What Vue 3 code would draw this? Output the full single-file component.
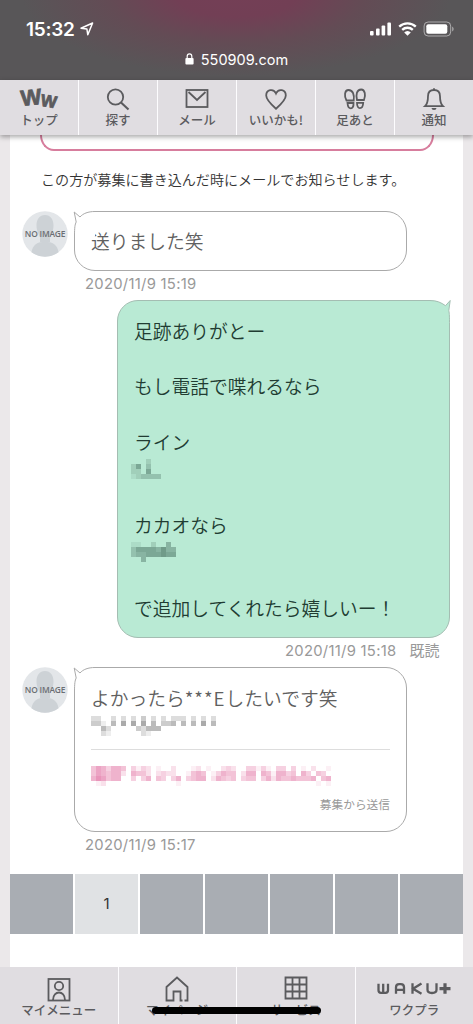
<script setup>
const topNav = [
  { label: 'トップ', icon: 'logo' },
  { label: '探す', icon: 'search' },
  { label: 'メール', icon: 'mail' },
  { label: 'いいかも!', icon: 'heart' },
  { label: '足あと', icon: 'feet' },
  { label: '通知', icon: 'bell' },
]
const bottomNav = [
  { label: 'マイメニュー', icon: 'menu' },
  { label: 'マイページ', icon: 'home' },
  { label: 'サービス', icon: 'grid' },
  { label: 'ワクプラ', icon: 'waku' },
]
const pages = ['', '1', '', '', '', '', '']

// Each digit is the strength of one 5px block, 0 = empty.
const masks = {
  line: ['000200', '250300', '220500', '123333'],
  kakao: ['110020040', '355554644', '344555655', '004000000'],
  name: [
    '2200202020302020222020202',
    '3310405050504033404040504',
    '0042000003244400000000000',
    '0021000000210000000000000',
  ],
  title: [
    '465355403132010020001201002320033131033030102001',
    '465455205442023220014540135440255054155340530430',
    '576455003035043035034550254340344035254454445045',
    '012000000000000001000000000000000000000000000101',
  ],
}
const cells = (rows) =>
  rows.flatMap((r, y) => [...r].map((v, x) => ({ x: x * 5, y: y * 5, o: +v / 10 }))).filter((c) => c.o)
const lineCells = cells(masks.line)
const kakaoCells = cells(masks.kakao)
const nameCells = cells(masks.name)
const titleCells = cells(masks.title)
</script>

<template>
  <div class="phone">
    <header class="chrome">
      <div class="status">
        <span class="time">15:32</span>
        <svg class="loc" width="14" height="14" viewBox="0 0 14 14"><path d="M1 6.200 12.600 1 7.800 12.800 6.900 7Z" fill="none" stroke="#fff" stroke-width="1.500" stroke-linejoin="round" /></svg>
        <svg class="signals" width="86" height="16" viewBox="0 0 86 16">
          <g fill="#fff">
            <rect x="1" y="10" width="3.600" height="4.500" rx="1" /><rect x="7" y="7.500" width="3.600" height="7" rx="1" />
            <rect x="12.600" y="4.500" width="3.600" height="10" rx="1" /><rect x="18.400" y="1.500" width="3.600" height="13" rx="1" />
            <path d="M35.200 11.500a4.300 4.300 0 0 1 6.600 0l-3.300 3.300Z" />
            <rect x="57.300" y="3.200" width="21" height="9.600" rx="2" />
            <path d="M83.300 5.500c1.600.8 1.600 4.200 0 5Z" opacity=".6" />
          </g>
          <g fill="none" stroke="#fff" stroke-width="2.300"><path d="M30.200 5.700a12 12 0 0 1 16.600 0M33.200 8.900a7.600 7.600 0 0 1 10.600 0" /></g>
          <rect x="55.100" y="1" width="26.600" height="14" rx="4" fill="none" stroke="#fff" stroke-opacity=".5" />
        </svg>
      </div>
      <div class="address">
        <svg width="9" height="12" viewBox="0 0 9 12"><rect x=".4" y="5" width="8.200" height="6.500" rx="1" fill="#fff" /><path d="M2.200 5.500V3.200a2.300 2.300 0 0 1 4.600 0v2.300" fill="none" stroke="#fff" stroke-width="1.200" /></svg>
        <span>550909.com</span>
      </div>
    </header>

    <nav class="tabs top">
      <div v-for="t in topNav" :key="t.icon" class="tab">
        <div v-if="t.icon === 'logo'" class="ww"><b>W</b><b class="small">W</b></div>
        <svg v-else width="44" height="26" viewBox="0 0 44 26" class="ico">
          <g v-if="t.icon === 'search'"><circle cx="19.500" cy="10" r="7.700" /><path d="m25 15.500 7.500 7" stroke-width="2.100" /></g>
          <g v-else-if="t.icon === 'mail'"><rect x="11.500" y="3" width="21" height="17" /><path d="m13.500 5 8.500 8 8.500-8" /></g>
          <path v-else-if="t.icon === 'heart'" d="M22 21.700C17 17.300 12.200 13 12.200 8.500c0-6 7.300-7.500 9.800-2 2.500-5.500 9.800-4 9.800 2 0 4.500-4.800 8.800-9.800 13.200Z" />
          <g v-else-if="t.icon === 'feet'">
            <path d="M13.500 13.500c-2.500-4.500-2-10.500 2-10.500 4.500 0 6 5 5.200 10.500Z" /><path d="M31 13c2-4.500 1-10.500-2.800-10.500-4.500 0-5.500 5-4.200 10.500Z" />
            <path d="M14.500 16h6c.5 7.200-5.500 7.200-6 0Z" /><path d="M24 15.800h6.200c-.3 7.200-6.400 7.200-6.200 0Z" />
          </g>
          <g v-else><path d="M13 19.200c2.300-2.200 3-5 3-10C16 5 18.500 3 22 3s6 2 6 6.200c0 5 .7 7.800 3 10Z" /><path d="M22 3V1.300" /><path d="M19.500 21h5a2.500 2 0 0 1-5 0Z" fill="#5b5b5e" stroke="none" /></g>
        </svg>
        <span class="lbl">{{ t.label }}</span>
      </div>
    </nav>

    <main class="sheet">
      <div class="pinkbox"></div>
      <p class="notice">この方が募集に書き込んだ時にメールでお知らせします。</p>

      <section class="row first">
        <div class="avatar">
          <svg width="46" height="46" viewBox="0 0 46 46">
            <circle cx="23" cy="23" r="22.700" fill="#e3e6e9" />
            <path d="M9.500 41.300c1-7.500 6-10.500 13.500-10.500s12.500 3 13.500 10.500A22.700 22.700 0 0 1 9.500 41.300Z" fill="#cdd2d6" />
            <path d="M23 4c5.500 0 8.500 4.500 8.500 10.500S28.500 25 28 26v5H18v-5c-.5-1-3.500-5.500-3.500-11.500S17.500 4 23 4Z" fill="#cdd2d6" />
          </svg>
          <span>NO IMAGE</span>
        </div>
        <div class="bubble">
          <svg class="tail" width="22" height="26" viewBox="0 0 22 26"><path class="patch" d="M0 0h22v26H0Z" /><path d="M22 1.500C15 1.500 10 3.500 7 7L1.200 2 3.200 12C2 14.500 1.500 17 1.500 26" /></svg>
          <div class="msg">送りました笑</div>
        </div>
      </section>
      <div class="stamp">2020/11/9 15:19</div>

      <section class="bubble mine">
        <svg class="tail" width="24" height="26" viewBox="0 0 24 26"><path class="patch" d="M0 0h24v26H0Z" /><path class="patch green" d="M0 1.500h3C10 1.500 14 3.500 18.500 6.700L23.200 1.500 21.800 11.500C22.500 15 22.500 18 22.500 26H0Z" /><path d="M0 1.500h3C10 1.500 14 3.500 18.500 6.700L23.200 1.500 21.800 11.500C22.500 15 22.500 18 22.500 26" fill="none" /></svg>
        <div class="msg">
          足跡ありがとー<br /><br />もし電話で喋れるなら<br /><br />ライン
          <div class="masked"><svg width="46" height="20"><rect v-for="(c, i) in lineCells" :key="i" :x="c.x" :y="c.y" width="5" height="5" fill="#3f6557" :fill-opacity="c.o" /></svg></div>
          <br />カカオなら
          <div class="masked"><svg width="46" height="20"><rect v-for="(c, i) in kakaoCells" :key="i" :x="c.x" :y="c.y" width="5" height="5" fill="#3f6557" :fill-opacity="c.o" /></svg></div>
          <br />で追加してくれたら嬉しいー！
        </div>
      </section>
      <div class="stamp right"><span>2020/11/9 15:18</span><span class="read">既読</span></div>

      <section class="row second">
        <div class="avatar">
          <svg width="46" height="46" viewBox="0 0 46 46">
            <circle cx="23" cy="23" r="22.700" fill="#e3e6e9" />
            <path d="M9.500 41.300c1-7.500 6-10.500 13.500-10.500s12.500 3 13.500 10.500A22.700 22.700 0 0 1 9.500 41.300Z" fill="#cdd2d6" />
            <path d="M23 4c5.500 0 8.500 4.500 8.500 10.500S28.500 25 28 26v5H18v-5c-.5-1-3.500-5.500-3.500-11.500S17.500 4 23 4Z" fill="#cdd2d6" />
          </svg>
          <span>NO IMAGE</span>
        </div>
        <div class="bubble tall">
          <svg class="tail" width="22" height="26" viewBox="0 0 22 26"><path class="patch" d="M0 0h22v26H0Z" /><path d="M22 1.500C15 1.500 10 3.500 7 7L1.200 2 3.200 12C2 14.500 1.500 17 1.500 26" /></svg>
          <div class="msg">よかったら<span class="stars">***E</span>したいです笑</div>
          <svg class="namemask" width="126" height="20"><rect v-for="(c, i) in nameCells" :key="i" :x="c.x" :y="c.y" width="5" height="5" fill="#555" :fill-opacity="c.o" /></svg>
          <div class="rule"></div>
          <svg class="titlemask" width="243" height="20"><rect v-for="(c, i) in titleCells" :key="i" :x="c.x" :y="c.y" width="5" height="5" fill="#e0689c" :fill-opacity="c.o" /></svg>
          <div class="from">募集から送信</div>
        </div>
      </section>
      <div class="stamp">2020/11/9 15:17</div>

      <div class="pager">
        <span v-for="(p, i) in pages" :key="i" :class="{ on: p }">{{ p }}</span>
      </div>
    </main>

    <nav class="tabs bottom">
      <div v-for="t in bottomNav" :key="t.icon" class="tab">
        <svg width="76" height="28" viewBox="0 0 76 28" class="ico">
          <g v-if="t.icon === 'menu'"><rect x="27.500" y="4" width="21" height="21.500" /><circle cx="38" cy="11" r="4.200" /><path d="M32 25c0-10 12-10 12 0" /></g>
          <path v-else-if="t.icon === 'home'" d="M45.500 25.500H48.500V12L38 2.500 27.500 12v13.500h7V16.500h7v9h2" />
          <path v-else-if="t.icon === 'grid'" d="M27.500 2.500h21v21h-21ZM27.500 9.500h21M27.500 16.500h21M34.500 2.500v21M41.500 2.500v21" />
          <g v-else stroke-width="2.300" transform="translate(-.5 -.7)">
            <path d="M3 9.500v6.500q0 2.500 2.500 2.500h4.500q2.500 0 2.500-2.500V9.500M7.700 9.500v9M20.500 19.500V13q0-3.200 3.200-3.200h1.600q3.200 0 3.200 3.200v6.500M20.500 15.500h8M37 9v10.500M46 9.200l-8.500 5.300 8.500 5M52 9v6.500q0 3.200 4.500 3.200t4.500-3.200V9" /><path d="M64 14.300h11M69.500 9v10.500" stroke-width="3.200" />
          </g>
        </svg>
        <span class="lbl">{{ t.label }}</span>
      </div>
      <i class="homebar"></i>
    </nav>
  </div>
</template>

<style>
html, body { margin: 0; overflow: hidden; }
</style>

<style scoped>
.phone { width: 473px; height: 1024px; display: flex; flex-direction: column; background: #ebe8ea; overflow: hidden; font-family: "Noto Sans CJK JP", sans-serif; }
.chrome { height: 80px; flex: none; box-sizing: border-box; color: #fff; background: radial-gradient(ellipse 215px 82px at 50% -6px, #743f56 0%, #723f55 28%, rgba(103, 72, 84, .75) 60%, rgba(88, 86, 88, 0) 100%), #585658; font-family: Inter, sans-serif; }
.status { display: flex; align-items: center; height: 30px; padding: 14px 18px 0 26px; }
.time { font-size: 19px; font-weight: 600; letter-spacing: -.3px; width: 50px; }
.loc { margin-left: 4px; }
.signals { margin-left: auto; }
.address { display: flex; align-items: center; justify-content: center; gap: 7px; height: 20px; margin-top: 5px; font-size: 14.500px; }
.tabs { display: flex; flex: none; background: #e0dde1; position: relative; z-index: 2; }
.tab { flex: 1; display: flex; flex-direction: column; align-items: center; border-left: 1px solid #fdfcfe; box-sizing: border-box; }
.tab:first-child { border-left: 0; }
.ico { fill: none; stroke: #5b5b5e; stroke-width: 1.800; display: block; flex: none; }
.ww { display: flex; justify-content: center; height: 26px; margin-top: 7px; color: #5b5b5e; font-family: "Liberation Sans", sans-serif; }
.ww b { font-size: 22px; line-height: 22px; transform: rotate(-6deg); -webkit-text-stroke: .8px #5b5b5e; }
.ww .small { font-size: 17px; line-height: 20px; padding-top: 5px; margin-left: -1px; transform: rotate(9deg); }
.lbl { color: #5b5b5e; font-weight: 500; white-space: nowrap; }
.top { height: 55px; box-shadow: 0 2px 5px rgba(0, 0, 0, .35); }
.top .ico { margin-top: 7px; }
.top .lbl { font-size: 12.500px; line-height: 16px; margin-top: -1px; }
.bottom { height: 57px; }
.bottom .ico { margin-top: 8px; }
.bottom .lbl { font-size: 12.500px; line-height: 16px; margin-top: -1px; }
.homebar { position: absolute; left: 152px; top: 40px; width: 169px; height: 7px; border-radius: 4px; background: #000; }
.sheet { flex: 1; width: 453px; margin: 0 auto; background: #fff; min-height: 0; position: relative; }
.pinkbox { height: 16px; width: 394px; margin: 0 auto; border: 2px solid #d77d9d; border-top: 0; border-radius: 0 0 26px 26px / 0 0 30px 30px; box-sizing: border-box; }
.notice { margin: 18px 0 0 31px; height: 20px; font-size: 14.080px; line-height: 20px; color: #333; white-space: nowrap; font-weight: 350; }
.row { display: flex; align-items: flex-start; }
.first { margin: 22px 0 0 12px; }
.second { margin: 7px 0 0 12px; }
.avatar { flex: none; display: grid; place-items: center; width: 46px; height: 46px; margin-right: 6px; }
.avatar > * { grid-area: 1 / 1; }
.avatar span { font: 600 8.400px/12px "Open Sans", sans-serif; color: #6b6e73; white-space: nowrap; letter-spacing: -.2px; }
.bubble { position: relative; box-sizing: border-box; width: 333px; height: 60px; border: 1px solid #aaa; border-radius: 21px; padding: 15px 16px 0; background: #fff; }
.tail { position: absolute; left: -2px; top: -2px; fill: #fff; stroke: #aaa; stroke-width: 1; }
.tail .patch { stroke: none; }
.msg { font-size: 18.750px; line-height: 27.700px; color: #606060; white-space: nowrap; font-weight: 350; }
.stars { letter-spacing: 1px; }
.stamp { margin-left: 75px; height: 25px; line-height: 26px; font-family: Inter, "Noto Sans CJK JP", sans-serif; font-size: 14.800px; letter-spacing: .28px; color: #999; white-space: nowrap; }
.mine { margin: 4px 0 0 107px; height: 338px; background: #b9ead4; border-color: #a4bdb2; padding: 16px 16px 0; }
.mine .tail { left: auto; right: -2px; stroke: #a4bdb2; }
.mine .green { fill: #b9ead4; }
.mine .msg { color: #213c32; }
.masked { height: 27.700px; display: flex; align-items: center; margin-left: -3px; }
.right { height: 22px; display: flex; margin-left: 275px; gap: 13px; line-height: 26px; }
.read { font-size: 15px; letter-spacing: 0; }
.tall { height: 165px; padding-top: 16px; }
.namemask { display: block; margin-top: 4px; }
.rule { height: 1px; background: #ddd; margin-top: 13px; }
.titlemask { display: block; margin-top: 16px; }
.from { text-align: right; font-size: 11.700px; line-height: 16px; color: #999; margin-top: 10px; }
.pager { display: flex; margin-top: 17px; height: 60px; }
.pager span { flex: 1 1 0; box-sizing: border-box; border-right: 2px solid #fff; background: #a9adb3; text-align: center; font: 15px/60px Inter, sans-serif; color: #333; }
.pager span:last-child { border-right: 0; }
.pager .on { background: #e0e2e4; }
</style>
